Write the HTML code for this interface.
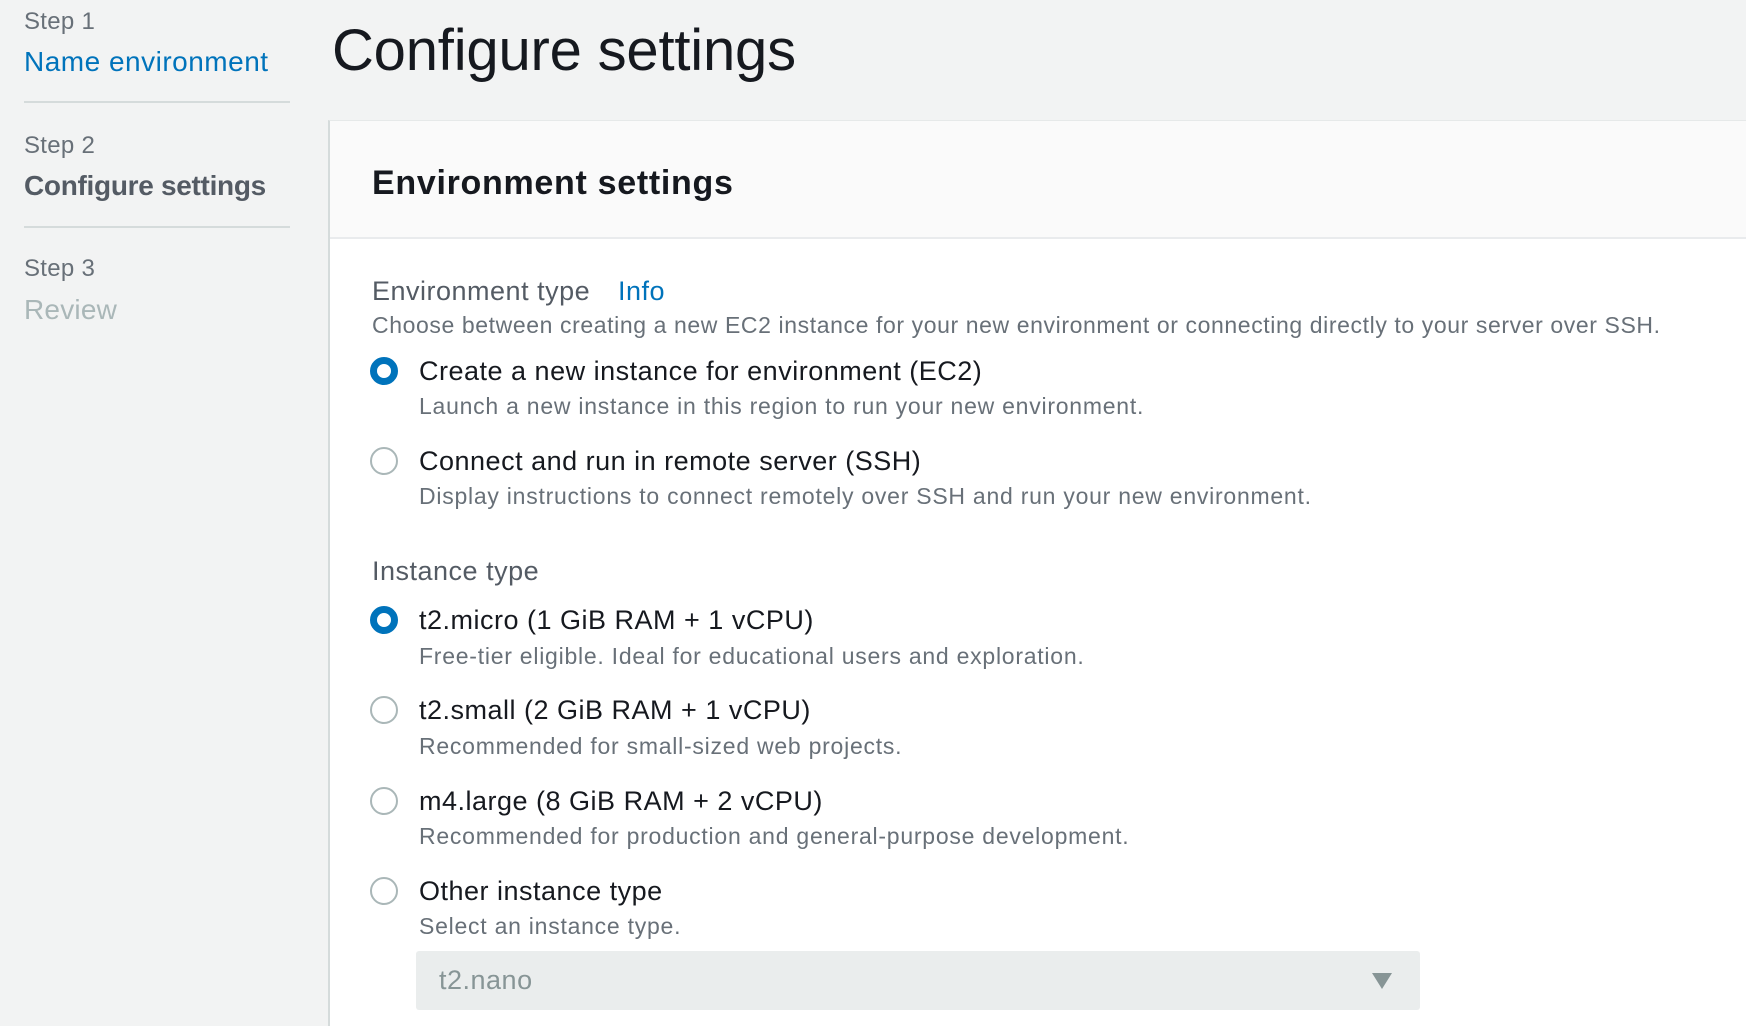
<!DOCTYPE html>
<html><head><meta charset="utf-8"><style>
*{margin:0;padding:0;box-sizing:border-box}
body{width:1746px;height:1026px;overflow:hidden;background:#f2f3f3;font-family:"Liberation Sans",sans-serif;position:relative;color:#16191f}
.a{position:absolute;white-space:nowrap;line-height:1}
.sb{font-size:24px;color:#687078;letter-spacing:.3px}
.hr{position:absolute;left:24px;width:266px;height:2px;background:#d5dbdb}
.panel{position:absolute;left:328px;top:120px;width:1418px;height:906px;background:#fff;border-left:2px solid #d5dbdb;border-top:1px solid #e6e9e9}
.hd{position:absolute;left:0;top:0;right:0;height:118px;background:#fafafa;border-bottom:2px solid #e9ebed}
.lab{font-size:27px;color:#16191f;letter-spacing:.5px}
.sub{font-size:23px;color:#687078;letter-spacing:.75px}
.r{position:absolute;width:28px;height:28px;border-radius:50%;border:2px solid #aab7b8;background:#fff}
.r.on{border:7px solid #0073bb}
</style></head><body>
<div class="a sb" style="left:24px;top:10px">Step 1</div>
<div class="a" style="left:24px;top:48px;font-size:28px;color:#0073bb;letter-spacing:.5px">Name environment</div>
<div class="hr" style="top:101px"></div>
<div class="a sb" style="left:24px;top:134px">Step 2</div>
<div class="a" style="left:24px;top:172px;font-size:28px;color:#545b64;font-weight:bold;letter-spacing:-.3px">Configure settings</div>
<div class="hr" style="top:226px"></div>
<div class="a sb" style="left:24px;top:257px">Step 3</div>
<div class="a" style="left:24px;top:296px;font-size:28px;color:#aab7b8;letter-spacing:.2px">Review</div>
<div class="a" style="left:332px;top:22px;font-size:58px;color:#16191f;letter-spacing:-.2px">Configure settings</div>
<div class="panel">
<div class="hd"></div>
<div class="a" style="left:42px;top:45px;font-size:34px;font-weight:bold;color:#16191f;letter-spacing:.7px">Environment settings</div>
<div class="a lab" style="left:42px;top:157px;color:#545b64">Environment type</div>
<div class="a lab" style="left:288px;top:157px;color:#0073bb">Info</div>
<div class="a sub" style="left:42px;top:193px;letter-spacing:.6px">Choose between creating a new EC2 instance for your new environment or connecting directly to your server over SSH.</div>
<div class="r on" style="left:40px;top:236px"></div>
<div class="a lab" style="left:89px;top:237px">Create a new instance for environment (EC2)</div>
<div class="a sub" style="left:89px;top:274px">Launch a new instance in this region to run your new environment.</div>
<div class="r" style="left:40px;top:326px"></div>
<div class="a lab" style="left:89px;top:327px">Connect and run in remote server (SSH)</div>
<div class="a sub" style="left:89px;top:364px">Display instructions to connect remotely over SSH and run your new environment.</div>
<div class="a lab" style="left:42px;top:437px;color:#545b64">Instance type</div>
<div class="r on" style="left:40px;top:485px"></div>
<div class="a lab" style="left:89px;top:486px">t2.micro (1 GiB RAM + 1 vCPU)</div>
<div class="a sub" style="left:89px;top:524px">Free-tier eligible. Ideal for educational users and exploration.</div>
<div class="r" style="left:40px;top:575px"></div>
<div class="a lab" style="left:89px;top:576px">t2.small (2 GiB RAM + 1 vCPU)</div>
<div class="a sub" style="left:89px;top:614px">Recommended for small-sized web projects.</div>
<div class="r" style="left:40px;top:666px"></div>
<div class="a lab" style="left:89px;top:667px">m4.large (8 GiB RAM + 2 vCPU)</div>
<div class="a sub" style="left:89px;top:704px">Recommended for production and general-purpose development.</div>
<div class="r" style="left:40px;top:756px"></div>
<div class="a lab" style="left:89px;top:757px">Other instance type</div>
<div class="a sub" style="left:89px;top:794px">Select an instance type.</div>
<div style="position:absolute;left:86px;top:830px;width:1004px;height:59px;background:#eaeded;border-radius:3px"></div>
<div class="a" style="left:109px;top:846px;font-size:27px;color:#879596;letter-spacing:.5px">t2.nano</div>
<svg style="position:absolute;left:1041px;top:851px" width="22" height="18"><path d="M1 1H21L11 17Z" fill="#879596"/></svg>
</div>
</body></html>
